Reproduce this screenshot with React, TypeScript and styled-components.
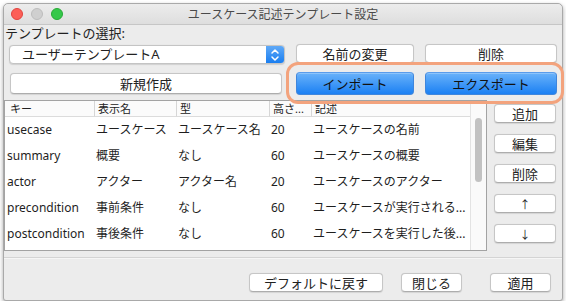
import React from "react";
import styled, { createGlobalStyle } from "styled-components";

const Global = createGlobalStyle`
  html, body { margin: 0; padding: 0; background: #ffffff; }
  body { font-family: "Noto Sans", "Noto Sans CJK JP", sans-serif; color: #222; }
  * { box-sizing: border-box; }
`;

const Window = styled.div`
  position: relative;
  margin: 3px 0 0 3px;
  width: 560px;
  height: 298px;
  border: 1px solid #a9a9a9;
  border-radius: 5px 5px 3px 3px;
  background: #ececec;
  box-shadow: 0 2px 4px rgba(0, 0, 0, 0.35);
  display: flex;
  flex-direction: column;
`;

const TitleBar = styled.div`
  position: relative;
  height: 21px;
  border-bottom: 1px solid #c6c6c6;
  border-radius: 5px 5px 0 0;
  background: linear-gradient(#ececec, #dedede);
  display: flex;
  align-items: center;
  padding-left: 7px;
  gap: 8px;
`;

const Light = styled.span<{ $fill: string; $edge: string }>`
  width: 12px;
  height: 12px;
  border-radius: 50%;
  background: ${(p) => p.$fill};
  border: 1px solid ${(p) => p.$edge};
`;

const Title = styled.div`
  position: absolute;
  left: 0;
  right: 0;
  top: 0;
  bottom: 0;
  display: flex;
  align-items: center;
  justify-content: center;
  font-size: 12px;
  color: #4a4a4a;
  pointer-events: none;
`;

const Label = styled.div`
  padding-left: 1px;
  height: 17px;
  line-height: 17px;
  font-size: 13px;
  color: #222;
`;

const TopGrid = styled.div`
  margin-top: 2px;
  padding-left: 5px;
  display: grid;
  grid-template-columns: 276px 118px 132px;
  grid-template-rows: 20px 23px;
  column-gap: 11px;
  row-gap: 8px;
`;

const Combo = styled.div`
  margin-top: 1px;
  height: 19px;
  display: flex;
  background: #fff;
  border: 1px solid #c4c4c4;
  border-radius: 4px;
  box-shadow: 0 0.5px 1px rgba(0, 0, 0, 0.12);
  overflow: hidden;
`;

const ComboText = styled.div`
  flex: 1;
  padding-left: 12px;
  font-size: 13px;
  line-height: 17px;
  color: #222;
`;

const Stepper = styled.div`
  width: 18px;
  background: linear-gradient(#5fa9f7, #1a7ef0);
  display: flex;
  align-items: center;
  justify-content: center;
`;

const Btn = styled.div<{ $w?: number; $h?: number; $ml?: number; $fs?: number }>`
  ${(p) => (p.$w ? `width: ${p.$w}px;` : "")}
  height: ${(p) => p.$h ?? 19}px;
  ${(p) => (p.$ml ? `margin-left: ${p.$ml}px;` : "")}
  background: #fff;
  border: 1px solid #c6c6c6;
  border-bottom-color: #adadad;
  border-radius: 4px;
  box-shadow: 0 0.5px 1px rgba(0, 0, 0, 0.1);
  font-size: ${(p) => p.$fs ?? 13}px;
  color: #222;
  display: flex;
  align-items: center;
  justify-content: center;
`;

const WideBtn = styled(Btn)`
  margin: 1px 3px 1px 1px;
`;

const BlueBtn = styled.div`
  height: 23px;
  border: 1px solid #3f86dc;
  border-top-color: #5a9ceb;
  border-radius: 4px;
  background: linear-gradient(#69b2fa, #1b80f3);
  box-shadow: inset 0 1px 0 rgba(255, 255, 255, 0.25);
  font-size: 13px;
  color: #111;
  display: flex;
  align-items: center;
  justify-content: center;
`;

const Highlight = styled.div`
  position: absolute;
  left: 282px;
  top: 58px;
  width: 278px;
  height: 42px;
  border: 3px solid #f3a37d;
  border-radius: 12px;
  pointer-events: none;
`;

const MainRow = styled.div`
  margin-top: 5px;
  display: flex;
`;

const TableFrame = styled.div`
  width: 483px;
  height: 151px;
  border: 1px solid #a3a3a3;
  background: #fff;
  display: flex;
`;

const Grid = styled.div`
  flex: 1;
  display: grid;
  grid-template-columns: 89px 82px 93px 42px 1fr;
  grid-auto-rows: 26px;
  grid-template-rows: 16px;
  align-content: start;
`;

const HeadCell = styled.div<{ $first?: boolean }>`
  height: 16px;
  font-size: 11px;
  line-height: 15px;
  color: #222;
  background: #fbfbfb;
  border-bottom: 1px solid #dcdcdc;
  padding-left: ${(p) => (p.$first ? 5 : 3)}px;
  border-left: ${(p) => (p.$first ? "none" : "1px solid #d6d6d6")};
  white-space: nowrap;
  overflow: hidden;
`;

const Cell = styled.div`
  font-size: 12px;
  line-height: 26px;
  padding-left: 2px;
  white-space: nowrap;
  overflow: hidden;
  color: #1e1e1e;
`;

const ScrollTrack = styled.div`
  width: 16px;
  background: #fafafa;
  border-left: 1px solid #e3e3e3;
  padding: 17px 0 0 4px;
`;

const Thumb = styled.div`
  width: 7px;
  height: 64px;
  border-radius: 4px;
  background: #c2c2c2;
`;

const SideButtons = styled.div`
  margin-left: 7px;
  padding-top: 4px;
  display: flex;
  flex-direction: column;
  gap: 11px;
`;

const Separator = styled.div`
  margin-top: 6px;
  height: 2px;
  border-top: 1px solid #d4d4d4;
  border-bottom: 1px solid #f6f6f6;
`;

const BottomBar = styled.div`
  margin-top: 14px;
  display: flex;
  justify-content: flex-end;
  padding-right: 11px;
`;

const Chevrons = () => (
  <svg width="10" height="14" viewBox="0 0 10 14">
    <path d="M2 5 L5 2 L8 5" fill="none" stroke="#fff" strokeWidth="1.5" strokeLinecap="round" strokeLinejoin="round" />
    <path d="M2 9 L5 12 L8 9" fill="none" stroke="#fff" strokeWidth="1.5" strokeLinecap="round" strokeLinejoin="round" />
  </svg>
);

const rows = [
  ["usecase", "ユースケース", "ユースケース名", "20", "ユースケースの名前"],
  ["summary", "概要", "なし", "60", "ユースケースの概要"],
  ["actor", "アクター", "アクター名", "20", "ユースケースのアクター"],
  ["precondition", "事前条件", "なし", "60", "ユースケースが実行される..."],
  ["postcondition", "事後条件", "なし", "60", "ユースケースを実行した後..."],
];

const headers = ["キー", "表示名", "型", "高さ...", "記述"];

export default function App() {
  return (
    <>
      <Global />
      <Window>
        <TitleBar>
          <Light $fill="#fc5f57" $edge="#e0443e" />
          <Light $fill="#cfcfcf" $edge="#bdbdbd" />
          <Light $fill="#35c84a" $edge="#27aa35" />
          <Title>ユースケース記述テンプレート設定</Title>
        </TitleBar>
        <Label>テンプレートの選択:</Label>
        <TopGrid>
          <Combo>
            <ComboText>ユーザーテンプレートA</ComboText>
            <Stepper>
              <Chevrons />
            </Stepper>
          </Combo>
          <Btn>名前の変更</Btn>
          <Btn>削除</Btn>
          <WideBtn $h={21}>新規作成</WideBtn>
          <BlueBtn>インポート</BlueBtn>
          <BlueBtn>エクスポート</BlueBtn>
        </TopGrid>
        <MainRow>
          <TableFrame>
            <Grid>
              {headers.map((h, i) => (
                <HeadCell key={h} $first={i === 0}>
                  {h}
                </HeadCell>
              ))}
              {rows.map((r) =>
                r.map((c, i) => <Cell key={r[0] + i}>{c}</Cell>)
              )}
            </Grid>
            <ScrollTrack>
              <Thumb />
            </ScrollTrack>
          </TableFrame>
          <SideButtons>
            <Btn $w={62}>追加</Btn>
            <Btn $w={62}>編集</Btn>
            <Btn $w={62}>削除</Btn>
            <Btn $w={62} $fs={11}>↑</Btn>
            <Btn $w={62} $fs={11}>↓</Btn>
          </SideButtons>
        </MainRow>
        <Separator />
        <BottomBar>
          <Btn $w={134}>デフォルトに戻す</Btn>
          <Btn $w={61} $ml={18}>閉じる</Btn>
          <Btn $w={61} $ml={28}>適用</Btn>
        </BottomBar>
        <Highlight />
      </Window>
    </>
  );
}
